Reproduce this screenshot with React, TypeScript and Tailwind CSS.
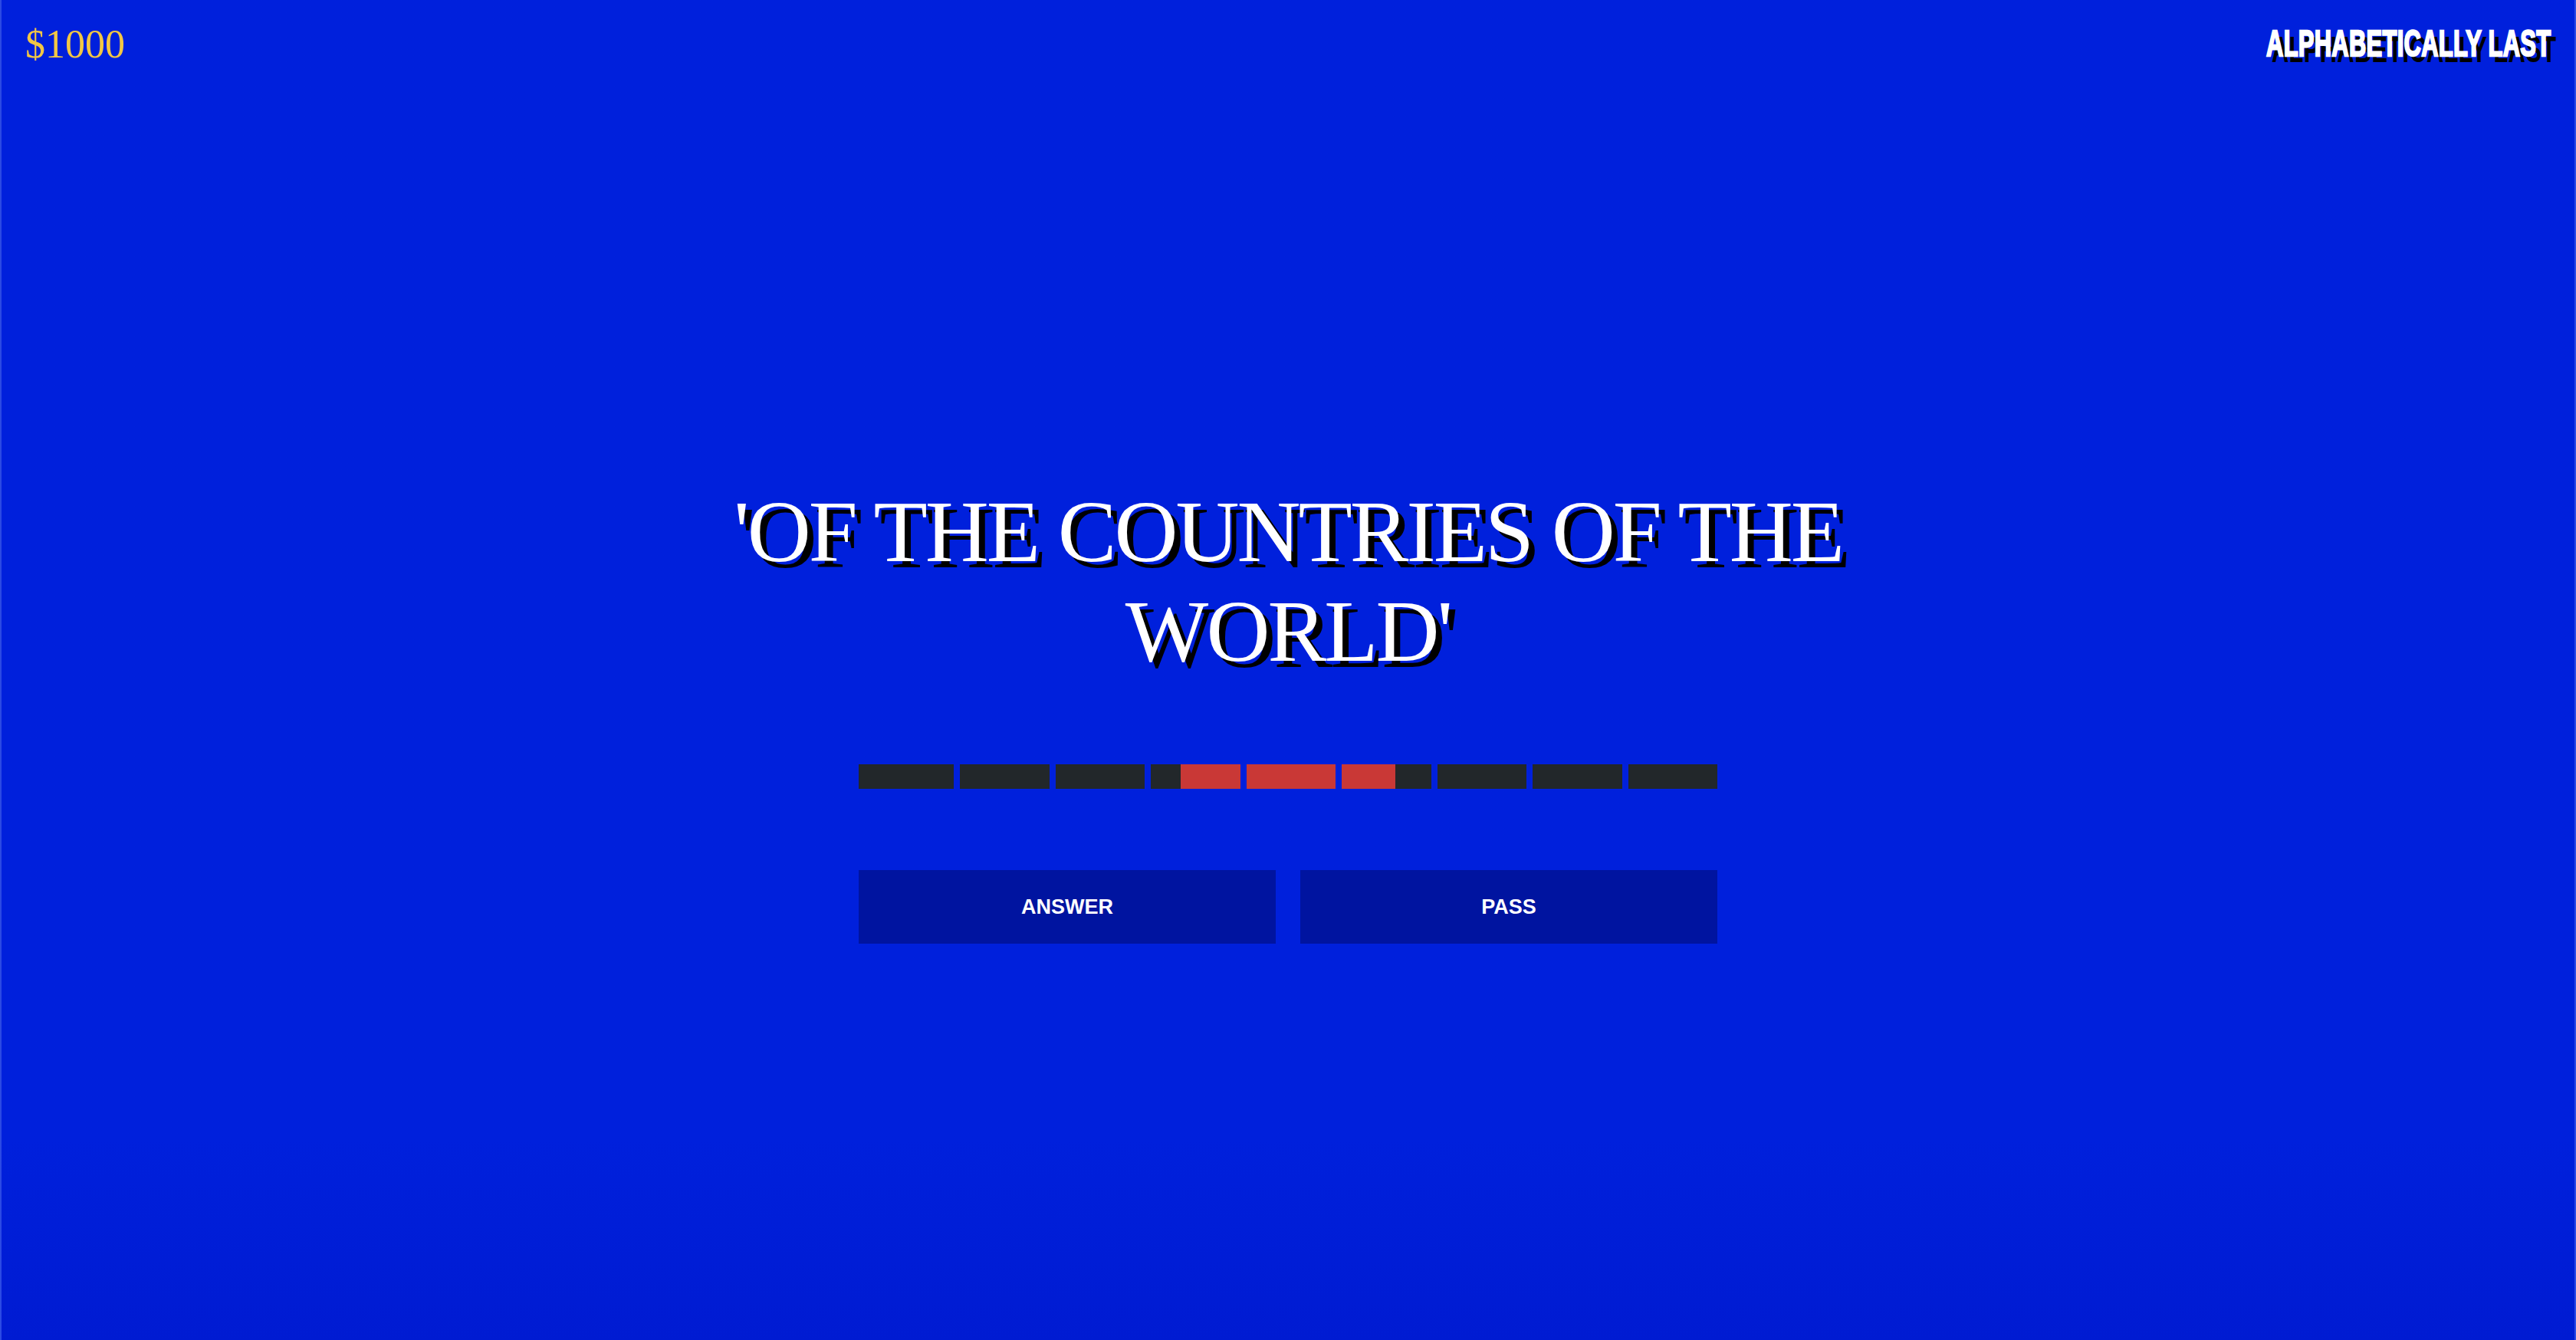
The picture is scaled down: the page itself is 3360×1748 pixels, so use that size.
import React from "react"

const segments = [
  { red: 0, side: "none", first: true },
  { red: 0, side: "none" },
  { red: 0, side: "none" },
  { red: 78, side: "right" },
  { red: 0, side: "full" },
  { red: 70, side: "left" },
  { red: 0, side: "none" },
  { red: 0, side: "none" },
  { red: 0, side: "none" },
]

export default function App() {
  return (
    <div className="h-[1748px] w-full flex flex-col bg-gradient-to-b from-[#0020dc] via-[#0020dc] via-85% to-[#001bd2] border-x-2 border-[#2c4ae4] overflow-hidden">
      <header className="flex items-start justify-between px-[31px] pt-[32px]">
        <div className="text-[52px] leading-none text-[#f2c744] font-['Liberation_Serif',serif]">
          $1000
        </div>
        <div className="inline-block origin-right scale-x-[0.63] text-[49px] leading-none font-bold text-white tracking-[0.5px] font-['Liberation_Sans',Arial,sans-serif] [-webkit-text-stroke:2.5px_white] [text-shadow:11px_8px_0_#000]">
          ALPHABETICALLY LAST
        </div>
      </header>

      <main className="flex flex-col items-center mt-[545px]">
        <h1 className="w-[1560px] text-center text-white text-[115px] leading-[130px] tracking-[-3px] font-normal font-['Liberation_Serif',serif] [text-shadow:8px_8px_0_#000]">
          'OF THE COUNTRIES OF THE WORLD'
        </h1>

        <div className="mt-[108px] flex w-[1120px] gap-2">
          {segments.map((s, i) => (
            <div
              key={i}
              className={
                s.first ? "relative h-8 w-[124px] flex-none bg-[#22272a]" : "relative h-8 flex-1 bg-[#22272a]"
              }
            >
              {s.side === "full" && <div className="absolute inset-0 bg-[#c93836]" />}
              {s.side === "right" && (
                <div className="absolute inset-y-0 right-0 bg-[#c93836]" style={{ width: `${s.red}px` }} />
              )}
              {s.side === "left" && (
                <div className="absolute inset-y-0 left-0 bg-[#c93836]" style={{ width: `${s.red}px` }} />
              )}
            </div>
          ))}
        </div>

        <div className="mt-[106px] flex w-[1120px] gap-8">
          <button className="h-24 flex-1 bg-[#0014a0] text-white text-[27px] font-bold font-['Liberation_Sans',Arial,sans-serif]">
            ANSWER
          </button>
          <button className="h-24 flex-1 bg-[#0014a0] text-white text-[27px] font-bold font-['Liberation_Sans',Arial,sans-serif]">
            PASS
          </button>
        </div>
      </main>
    </div>
  )
}
